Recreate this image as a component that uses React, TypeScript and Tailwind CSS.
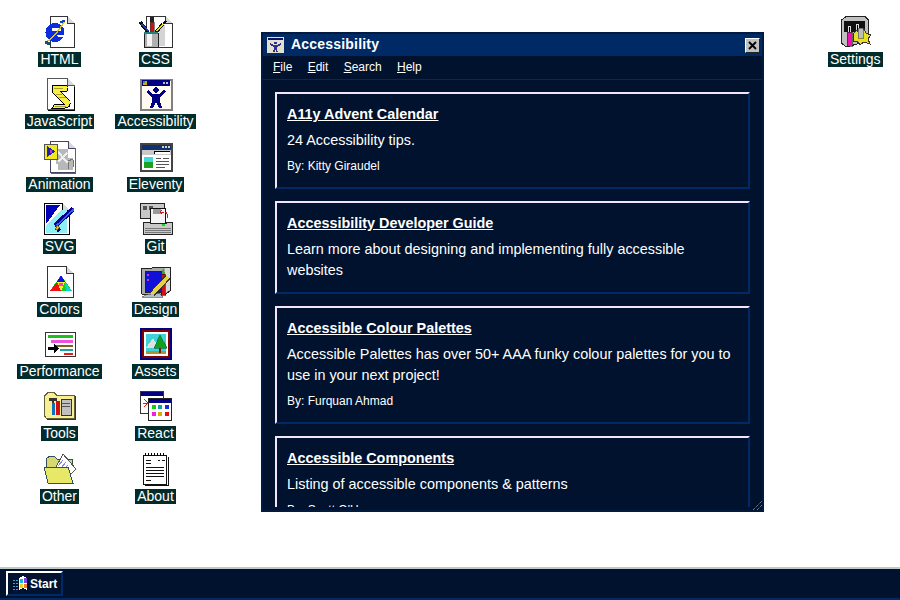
const Px = ({ children }: { children: React.ReactNode }) => (
  <svg width="34" height="34" viewBox="0 0 34 34" shapeRendering="crispEdges" className="block">
    {children}
  </svg>
);

// dog-eared document used by several icons
const Doc = ({ x = 8, w = 23, y = 1, h = 32, stroke = "#000" }: { x?: number; w?: number; y?: number; h?: number; stroke?: string }) => (
  <>
    <path d={`M${x} ${y}H${x + w - 7}L${x + w} ${y + 7}V${h}H${x}Z`} fill="#fff" stroke={stroke} />
    <path d={`M${x + w - 7} ${y}V${y + 7}H${x + w}`} fill="#d8d8d8" stroke={stroke} />
  </>
);

const icons: Record<string, React.ReactNode> = {
  HTML: (
    <Px>
      <Doc x={7} w={24} h={32} stroke="#333" />
      <circle cx="12" cy="17.5" r="9.5" fill="#0c2ce0" />
      <rect x="9" y="13" width="9" height="3" fill="#fff" />
      <path d="M14 20H23V22H15Z" fill="#fff" />
      <path d="M2 28Q12 22 22 6" stroke="#d8c020" strokeWidth="1.4" fill="none" />
      <path d="M2 27L7 29" stroke="#0c5868" strokeWidth="3" />
      <path d="M17 7L22 6" stroke="#1040c0" strokeWidth="2" />
    </Px>
  ),
  CSS: (
    <Px>
      <Doc x={7} w={26} h={32} stroke="#333" />
      <rect x="20" y="10" width="6" height="21" fill="#d4d4d4" />
      <path d="M1 7L9 17" stroke="#111" strokeWidth="3.4" />
      <path d="M3 9L9 16" stroke="#2040c0" strokeWidth="1.6" />
      <rect x="11" y="2" width="4" height="5" fill="#222" />
      <rect x="11" y="7" width="4" height="10" fill="#d01010" stroke="#333" strokeWidth=".6" />
      <path d="M17 17L24 9" stroke="#111" strokeWidth="3.4" />
      <path d="M18 16L24 9" stroke="#f0e020" strokeWidth="1.6" />
      <path d="M24 9L27 6" stroke="#111" strokeWidth="2" />
      <rect x="5" y="18" width="14" height="14" fill="#b0b0b0" stroke="#222" />
      <rect x="8" y="19" width="5" height="12" fill="#f4f4f4" />
      <rect x="5" y="17" width="14" height="2" fill="#208080" />
    </Px>
  ),
  JavaScript: (
    <Px>
      <Doc x={4} w={27} y={1} h={32} stroke="#555" />
      <path d="M31 10V33H5" stroke="#000" fill="none" />
      <path d="M9 8H22Q27 9 24 14H17L27 24Q28 31 22 31H9L12 27H21L9 15Z" fill="#f8f040" stroke="#000" />
      <path d="M11 11H20M13 17H19M16 20H23M12 29H23" stroke="#a8a030" />
    </Px>
  ),
  Accessibility: (
    <Px>
      <rect x="1.5" y="2.5" width="31" height="30" fill="#fffbf0" stroke="#808080" strokeWidth="2" />
      <rect x="3" y="3" width="28" height="6" fill="#000080" />
      <rect x="4" y="4" width="4" height="4" fill="#d8a020" />
      <rect x="4" y="4" width="2" height="2" fill="#20a040" />
      <rect x="24" y="5" width="2" height="2" fill="#c0c0c0" />
      <rect x="27" y="5" width="2" height="2" fill="#c0c0c0" />
      <circle cx="17" cy="13" r="2.6" fill="#000080" />
      <path d="M9 13L14 17H20L25 13L27 15L21 20V24L23 31H20L17 25L14 31H11L13 24V20L7 15Z" fill="#000080" />
    </Px>
  ),
  Animation: (
    <Px>
      <Doc x={7} w={25} y={1} h={32} stroke="#446" />
      <path d="M32 8V33H8" stroke="#208080" fill="none" />
      <path d="M13 9H25V18H30V30H15V24H13Z" fill="#b8b8b8" />
      <path d="M14 11L25 23M15 22L24 13" stroke="#eee" strokeWidth="2" />
      <path d="M25 22V29M30 20V27M25 21L30 19" stroke="#777" fill="none" />
      <rect x="1" y="4" width="13" height="15" fill="#f0e820" stroke="#555" />
      <path d="M4 6L12 11.5L4 17Z" fill="#2020b0" />
      <rect x="7" y="10" width="2" height="3" fill="#b040c0" />
    </Px>
  ),
  Eleventy: (
    <Px>
      <rect x="2" y="4" width="31" height="27" fill="#fff" stroke="#444" strokeWidth="2" />
      <rect x="3" y="5" width="29" height="5" fill="#103070" />
      <rect x="23" y="6" width="2" height="2" fill="#d0d0d0" />
      <rect x="26" y="6" width="2" height="2" fill="#d0d0d0" />
      <rect x="29" y="6" width="2" height="2" fill="#d0d0d0" />
      <rect x="3" y="10" width="29" height="5" fill="#c8c8c8" />
      <rect x="15" y="11" width="16" height="3" fill="#fff" />
      <path d="M15 11H31M15 11V14" stroke="#000" />
      <rect x="5" y="17" width="9" height="5" fill="#40d8e0" />
      <rect x="5" y="22" width="9" height="6" fill="#20a020" />
      <path d="M17 18H22M24 18H30M17 21H30M17 24H30M17 27H26" stroke="#555" />
    </Px>
  ),
  SVG: (
    <Px>
      <Doc x={1} w={25} y={1} h={32} />
      <path d="M3 3H17L3 22Z" fill="#0000b8" />
      <path d="M18 8H24V31H3V23Z" fill="#90eef6" />
      <path d="M12 24L30 7" stroke="#000090" strokeWidth="5" />
      <path d="M13 24L31 7" stroke="#3060f0" strokeWidth="1.6" />
      <path d="M14 30L17 27" stroke="#000090" strokeWidth="2" />
      <path d="M12 28L14 23L17 26Z" fill="#e8c020" stroke="#222" strokeWidth=".6" />
    </Px>
  ),
  Git: (
    <Px>
      <rect x="1.5" y="1.5" width="24" height="15" fill="#c8c8c8" stroke="#222" />
      <rect x="4" y="4" width="4" height="4" fill="#555" />
      <rect x="10" y="4" width="4" height="4" fill="#555" />
      <rect x="11.5" y="6.5" width="15" height="15" fill="#f4f4f4" stroke="#111" />
      <rect x="14" y="7" width="8" height="5" fill="#999" />
      <path d="M25 10H21M23 8L21 10L23 12M26 10Q29 11 28 16" stroke="#e01010" fill="none" />
      <path d="M4.5 20.5H11V21H27V20.5H33V32.5H4.5Z" fill="#c8c8c8" stroke="#222" />
      <path d="M6 26H32M6 28H32M6 30H32" stroke="#777" />
      <rect x="23" y="22" width="3" height="2" fill="#20d020" />
    </Px>
  ),
  Colors: (
    <Px>
      <Doc x={4} w={26} h={32} stroke="#333" />
      <path d="M18 10L29 26H7Z" fill="#18d018" />
      <path d="M18 10L22 17H14Z" fill="#1010e0" />
      <path d="M14 17L18 26H7Z" fill="#f01010" />
      <path d="M14 17H22L18 26Z" fill="#f8f020" />
      <path d="M22 17L29 26H23Z" fill="#10d0d0" />
      <rect x="16" y="18" width="4" height="3" fill="#f040d0" />
    </Px>
  ),
  Design: (
    <Px>
      <path d="M2 4L24 2H31V26L27 29H3Z" fill="#a8a8a8" stroke="#222" />
      <path d="M26 3H31V25L26 28Z" fill="#d8d8d8" />
      <rect x="6" y="6" width="18" height="21" fill="#1010d8" stroke="#222" />
      <rect x="8" y="9" width="2" height="2" fill="#c040c0" />
      <rect x="8" y="14" width="2" height="2" fill="#c040c0" />
      <path d="M3 32Q12 27 21 29L24 32Z" fill="#b0c0c0" stroke="#444" strokeWidth=".6" />
      <rect x="22" y="9" width="4" height="21" fill="#d01010" stroke="#111" strokeWidth=".6" />
      <path d="M23 9L24 2L26 9Z" fill="#40a030" />
      <path d="M13 29L29 12" stroke="#333" strokeWidth="6" />
      <path d="M13 29L29 12" stroke="#e8d040" strokeWidth="4" />
    </Px>
  ),
  Performance: (
    <Px>
      <rect x="2.5" y="5.5" width="30" height="24" fill="#fff" stroke="#333" />
      <rect x="5" y="8" width="25" height="3" fill="#20c020" />
      <rect x="8" y="13" width="22" height="3" fill="#f050e0" />
      <rect x="13" y="18" width="17" height="2" fill="#806020" />
      <rect x="17" y="22" width="13" height="2" fill="#20a0a0" />
      <rect x="21" y="26" width="9" height="2" fill="#e02020" />
      <path d="M5 20H11V17L16 21.5L11 26V23H5Z" fill="#000" />
    </Px>
  ),
  Assets: (
    <Px>
      <rect x="2" y="2" width="30" height="30" fill="#800000" stroke="#000080" strokeWidth="2" />
      <rect x="5" y="5" width="24" height="24" fill="#fff" />
      <rect x="7" y="7" width="20" height="18" fill="#40d0d8" />
      <path d="M7 21L14 11L20 21Z" fill="#e0e0e0" />
      <path d="M7 24H27V27H7Z" fill="#b09030" />
      <path d="M21 8L28 21H15Z" fill="#10a020" stroke="#063" strokeWidth=".6" />
      <rect x="20" y="21" width="2" height="5" fill="#702000" />
    </Px>
  ),
  Tools: (
    <Px>
      <path d="M1.5 7L5 3.5H11L14 6.5H31V29.5H3.5L1.5 27Z" fill="#f8f090" stroke="#606040" />
      <path d="M4 30H32V7" stroke="#304000" fill="none" />
      <path d="M6 9H14V12H11V26H9V12H6Z" fill="#333" />
      <rect x="9" y="14" width="3" height="12" fill="#1070c0" />
      <rect x="13" y="12" width="4" height="14" fill="#d01010" />
      <rect x="18" y="10" width="10" height="16" fill="#c0c0c0" stroke="#333" />
      <path d="M19 14H27M19 17H27" stroke="#555" />
    </Px>
  ),
  React: (
    <Px>
      <rect x="1.5" y="2.5" width="23" height="22" fill="#fff" stroke="#333" />
      <rect x="2" y="3" width="22" height="4" fill="#000080" />
      <path d="M4 14H14M9 9V19M5 10L13 18M13 10L5 18" stroke="#f01010" />
      <rect x="9.5" y="9.5" width="23" height="22" fill="#fff" stroke="#222" />
      <rect x="10" y="10" width="22" height="4" fill="#000080" />
      <rect x="13" y="16" width="4" height="4" fill="#10d010" />
      <rect x="19" y="16" width="4" height="4" fill="#10a0a0" />
      <rect x="26" y="16" width="4" height="4" fill="#1030e0" />
      <rect x="13" y="23" width="4" height="4" fill="#f020e0" />
      <rect x="19" y="23" width="4" height="4" fill="#d0b000" />
      <rect x="26" y="23" width="4" height="4" fill="#e01010" />
    </Px>
  ),
  Other: (
    <Px>
      <path d="M3 7L7 4H11L14 7H29V19H3Z" fill="#d8d870" stroke="#305060" />
      <path d="M13 15L20 2L33 17L27 23Z" fill="#fff" stroke="#555" />
      <path d="M15 14L20 8M18 16L23 10M21 18L25 13" stroke="#8888e8" />
      <path d="M1 15H25L30 31H5Z" fill="#e8e868" stroke="#305060" />
    </Px>
  ),
  About: (
    <Px>
      <rect x="4.5" y="3.5" width="23" height="29" rx="1" fill="#fff" stroke="#111" />
      <path d="M29 5V33H6" stroke="#111" fill="none" />
      <path d="M6 1V4M9 1V4M12 1V4M15 1V4M18 1V4M21 1V4M24 1V4" stroke="#000" />
      <path d="M7 8H12M7 11H12M19 8H21M23 8H26M7 15H25M7 18H25M7 21H25M7 24H25M7 28H12" stroke="#111" />
    </Px>
  ),
  Settings: (
    <Px>
      <path d="M3.5 5L8 1.5H27L30.5 5V26L8 32L3.5 28Z" fill="#c0c0c0" stroke="#222" />
      <rect x="6" y="6" width="21" height="11" fill="#111" />
      <path d="M10 17V11H12V17M18 17V9H20V17" stroke="#ddd" />
      <rect x="9" y="17" width="5" height="14" fill="#f010b0" stroke="#222" strokeWidth=".6" />
      <path d="M15 19L19 15L21 18L26 14L28 18L33 20L30 24L32 29L26 27L22 30L19 26L15 26Z" fill="#e8e020" stroke="#333" />
      <rect x="20" y="13" width="5" height="10" fill="#b8c0b8" stroke="#444" strokeWidth=".6" />
    </Px>
  ),
};

const desktop = [
  "HTML", "CSS", "JavaScript", "Accessibility", "Animation", "Eleventy", "SVG", "Git",
  "Colors", "Design", "Performance", "Assets", "Tools", "React", "Other", "About",
];

const DesktopIcon = ({ name }: { name: string }) => (
  <div className="flex h-[62.4px] flex-col items-center">
    {icons[name]}
    <span className="mt-[3px] bg-[#022c2c] px-[2px] text-[14px] leading-[15px] whitespace-nowrap text-white">{name}</span>
  </div>
);

const cards = [
  { title: "A11y Advent Calendar", text: "24 Accessibility tips.", by: "By: Kitty Giraudel" },
  {
    title: "Accessibility Developer Guide",
    text: "Learn more about designing and implementing fully accessible websites",
  },
  {
    title: "Accessible Colour Palettes",
    text: "Accessible Palettes has over 50+ AAA funky colour palettes for you to use in your next project!",
    by: "By: Furquan Ahmad",
  },
  { title: "Accessible Components", text: "Listing of accessible components & patterns", by: "By: Scott O'Hara" },
];

export default function App() {
  return (
    <div className="relative h-[600px] w-[900px] overflow-hidden bg-white font-['Liberation_Sans',Arial,sans-serif]">
      <div className="grid w-[214px] grid-cols-[97px_95px] pl-[11px] pt-[15px]">
        {desktop.map((name) => (
          <DesktopIcon key={name} name={name} />
        ))}
      </div>

      <div className="absolute left-[828px] top-[15px]">
        <DesktopIcon name="Settings" />
      </div>

      {/* floating window */}
      <div className="absolute left-[261px] top-[32px] flex h-[480px] w-[503px] flex-col overflow-hidden border-2 border-[#001a40] bg-[#00122e] text-white">
        <div className="flex h-[22px] shrink-0 items-center bg-[#002a66] pl-[4px] pr-[2px]">
          <svg width="17" height="16" viewBox="0 0 17 16" shapeRendering="crispEdges">
            <rect x="0" y="0" width="17" height="16" fill="#e4e0d0" />
            <rect x="1" y="1" width="15" height="2" fill="#101060" />
            <circle cx="8.5" cy="6" r="1.5" fill="#303090" />
            <path d="M3 6L7 8H10L14 6V8L10 10V12L11 15H9L8.5 13L8 15H6L7 12V10L3 8Z" fill="#303090" />
          </svg>
          <span className="mb-[2px] ml-[7px] text-[14px] font-bold tracking-[0.2px]">Accessibility</span>
          <button className="ml-auto flex h-[15px] w-[15px] items-center justify-center border border-t-white border-l-white border-r-[#222] border-b-[#222] bg-[#c0c0c0]">
            <svg width="9" height="9" viewBox="0 0 9 9">
              <path d="M1 1L8 8M8 1L1 8" stroke="#000" strokeWidth="1.8" />
            </svg>
          </button>
        </div>

        <nav className="flex h-[24px] shrink-0 items-center gap-[15.3px] border-b border-[#002a66] pb-[1px] pl-[10px] text-[12px]">
          {["File", "Edit", "Search", "Help"].map((m) => (
            <span key={m}>
              <span className="underline">{m[0]}</span>
              {m.slice(1)}
            </span>
          ))}
        </nav>

        <div className="mb-[3px] flex min-h-0 flex-1 flex-col gap-[12px] overflow-hidden pl-[12px] pr-[12px] pt-[12px]">
          {cards.map((c) => (
            <article
              key={c.title}
              className={`shrink-0 border-2 border-t-[#f4e4ff] border-l-[#f4e4ff] border-r-[#002a66] border-b-[#002a66] px-[10px] pt-[10px] ${c.by ? "pb-[12px]" : "pb-[11px]"}`}
            >
              <h2 className="text-[14.4px] font-bold leading-[21px] underline">{c.title}</h2>
              <p className="mt-[5px] text-[14.4px] leading-[21px]">{c.text}</p>
              {c.by && <p className="mt-[6px] text-[12px] leading-[18px]">{c.by}</p>}
            </article>
          ))}
        </div>

        <svg className="absolute bottom-0 right-0" width="9" height="9" viewBox="0 0 9 9">
          <path d="M0 9L9 0M4 9L9 4" stroke="#aaa" strokeDasharray="1 1" />
        </svg>
      </div>

      {/* taskbar */}
      <div className="absolute bottom-0 left-0 flex h-[33px] w-full items-center border-t-2 border-b-2 border-t-[#c0c8c8] border-b-[#002a66] bg-[#00122e] pl-[6px]">
        <button className="flex h-[25px] w-[57px] items-center border-2 border-t-white border-l-white border-r-[#002a66] border-b-[#002a66] pl-[4px] text-[12px] font-bold text-white">
          <svg width="18" height="16" viewBox="0 0 18 16" shapeRendering="crispEdges">
            <path d="M7 2L11 0L15 2V14L11 12L7 14Z" fill="#fff" />
            <rect x="8" y="3" width="3" height="4" fill="#10c0d0" />
            <rect x="12" y="2" width="3" height="5" fill="#8040e0" />
            <rect x="8" y="8" width="3" height="4" fill="#f0d020" />
            <rect x="12" y="8" width="3" height="4" fill="#f08020" />
            <path d="M1 4H6M1 7H6M1 10H6M1 13H6" stroke="#40a0d0" strokeDasharray="2 1" />
          </svg>
          Start
        </button>
      </div>
    </div>
  );
}
